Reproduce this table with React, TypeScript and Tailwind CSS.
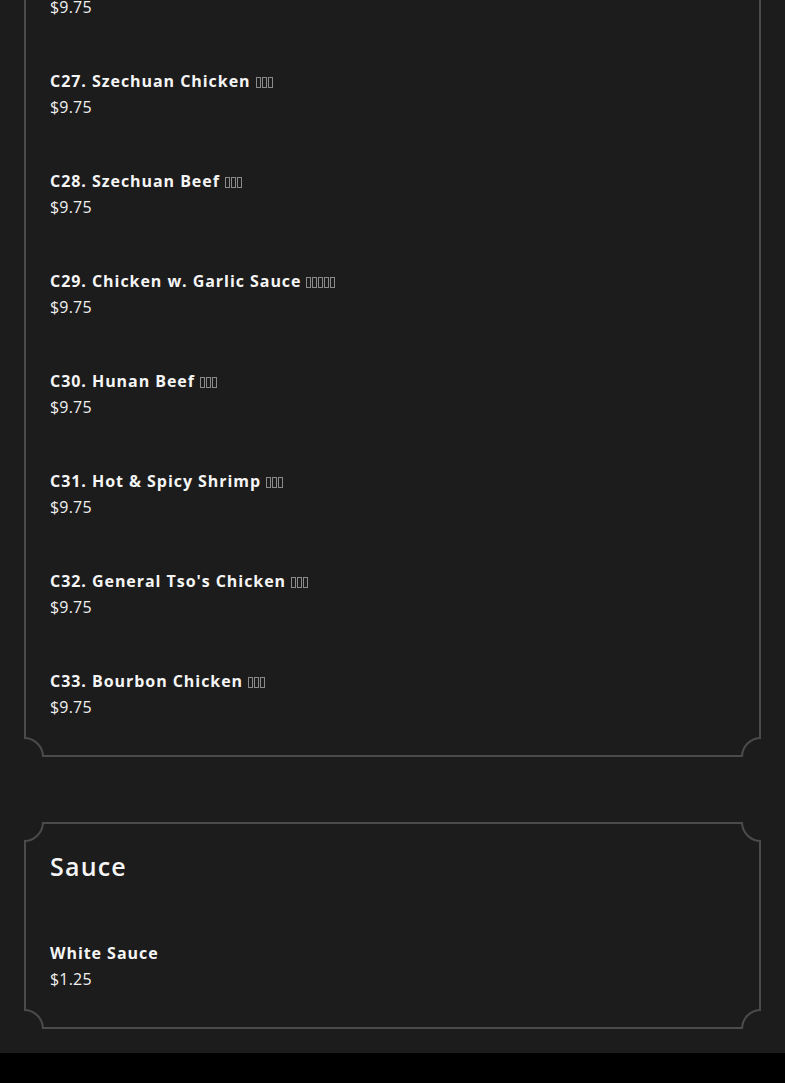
const font = { fontFamily: "'Open Sans', 'Liberation Sans', sans-serif" };

type Item = { name: string; boxes: number; price: string };

const mainItems: Item[] = [
  { name: "C27. Szechuan Chicken", boxes: 3, price: "$9.75" },
  { name: "C28. Szechuan Beef", boxes: 3, price: "$9.75" },
  { name: "C29. Chicken w. Garlic Sauce", boxes: 5, price: "$9.75" },
  { name: "C30. Hunan Beef", boxes: 3, price: "$9.75" },
  { name: "C31. Hot & Spicy Shrimp", boxes: 3, price: "$9.75" },
  { name: "C32. General Tso's Chicken", boxes: 3, price: "$9.75" },
  { name: "C33. Bourbon Chicken", boxes: 3, price: "$9.75" },
];

// missing-glyph boxes, the way the original page shows its Chinese names
function Tofu({ count }: { count: number }) {
  return (
    <span className="ml-[5px] inline-flex gap-px align-[-1px]">
      {Array.from({ length: count }).map((_, i) => (
        <span key={i} className="inline-block h-[11px] w-[5px] border border-[#8a8a8a]" />
      ))}
    </span>
  );
}

function Corner({ pos }: { pos: string }) {
  return (
    <div
      className={`absolute h-[40px] w-[40px] rounded-full border-2 border-[#4b4b4b] bg-[#1c1c1c] ${pos}`}
    />
  );
}

function Card({ children, className = "" }: { children: React.ReactNode; className?: string }) {
  return (
    <div className={`relative mx-6 overflow-hidden ${className}`}>
      <div className="border-2 border-[#4b4b4b] px-6 pt-[26px] pb-[35px]">{children}</div>
      <Corner pos="-left-[20px] -top-[20px]" />
      <Corner pos="-right-[20px] -top-[20px]" />
      <Corner pos="-left-[20px] -bottom-[20px]" />
      <Corner pos="-right-[20px] -bottom-[20px]" />
    </div>
  );
}

function MenuItem({ item }: { item: Item }) {
  return (
    <div className="leading-[26px]">
      <div className="text-[16px] font-bold tracking-[0.95px] text-[#f5f5f5]">
        {item.name}
        {item.boxes > 0 && <Tofu count={item.boxes} />}
      </div>
      <div className="text-[16px] tracking-[0.2px] text-[#f0f0f0]">{item.price}</div>
    </div>
  );
}

export default function App() {
  return (
    <div className="min-h-[1083px] overflow-hidden bg-[#1c1c1c]" style={font}>
      <Card className="-mt-[34px]">
        <div className="flex flex-col gap-12">
          <div className="text-[16px] leading-[26px] tracking-[0.2px] text-[#f0f0f0]">$9.75</div>
          {mainItems.map((item) => (
            <MenuItem key={item.name} item={item} />
          ))}
        </div>
      </Card>

      <Card className="mt-[65px]">
        <h2 className="text-[25px] font-semibold leading-[32px] tracking-[1.2px] text-[#f5f5f5]">
          Sauce
        </h2>
        <div className="mt-[58px] flex flex-col gap-12">
          <MenuItem item={{ name: "White Sauce", boxes: 0, price: "$1.25" }} />
        </div>
      </Card>

      <div className="mt-6 h-[60px] bg-black" />
    </div>
  );
}
